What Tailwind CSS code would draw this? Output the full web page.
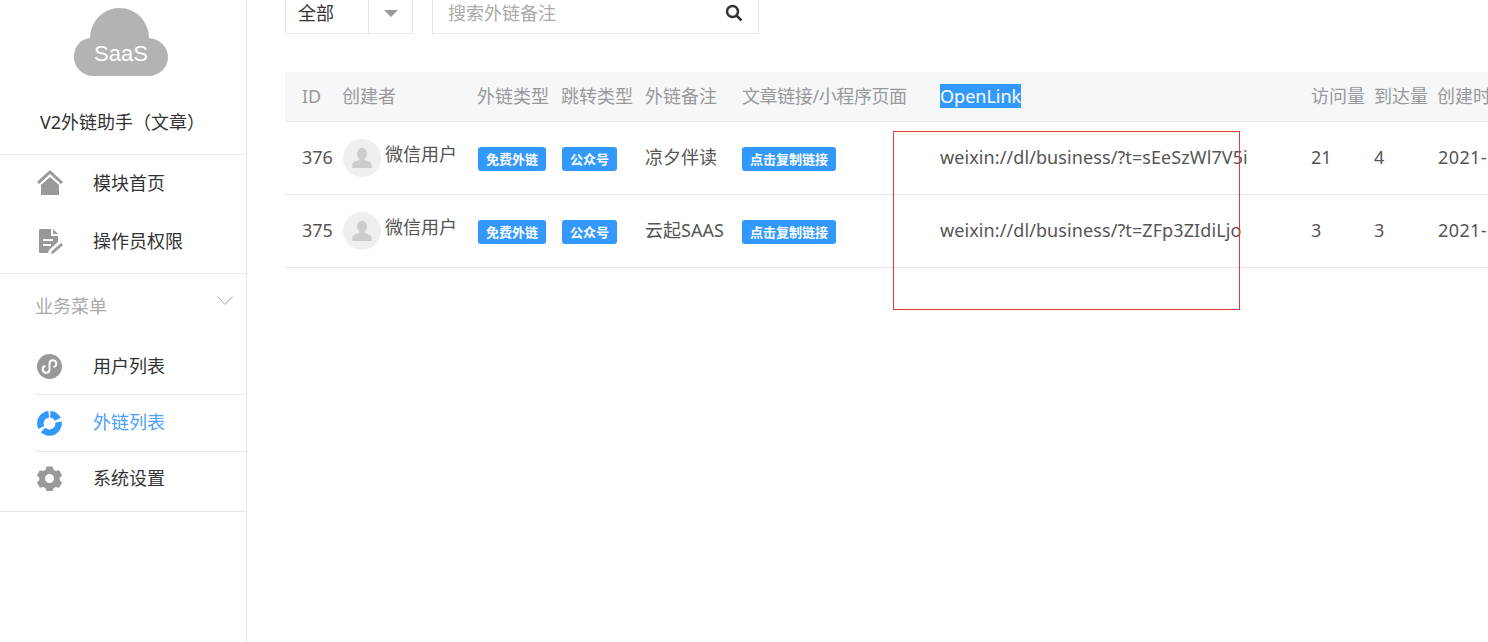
<!DOCTYPE html>
<html lang="zh-CN">

<head>
  <meta charset="utf-8" />
  <title>V2外链助手</title>
  <script src="https://cdn.jsdelivr.net/npm/@tailwindcss/browser@4"></script>
</head>

<body class="relative flex h-[642px] overflow-hidden bg-white text-[18px] text-[#333] font-['Noto_Sans','Noto_Sans_CJK_SC',sans-serif]">

  <!-- SIDEBAR -->
  <aside class="w-[247px] h-[642px] shrink-0 border-r border-[#e8e8e8]">
    <div class="h-[155px] pt-[8px] border-b border-[#e8e8e8]">
      <svg class="ml-[74px]" width="94" height="68" viewBox="0 0 94 68">
        <path fill="#b3b3b3" d="M16 30A29.500 30 0 0 1 75 30C86 31 94 39 94 49 94 60 85 68 74 68H20C9 68 0 60 0 49 0 39 6 31 16 30z" />
        <text x="47" y="53" text-anchor="middle" fill="#fff" font-size="22" font-family="Liberation Sans, sans-serif">SaaS</text>
      </svg>
      <div class="ml-[40px] mt-[32px] leading-[28px] text-[#333]">V2外链助手（文章）</div>
    </div>

    <div class="h-[119px] border-b border-[#e8e8e8]">
      <div class="flex items-center h-[56px] pl-[37px]">
        <svg class="w-[26px] h-[26px] mr-[30px]" viewBox="0 0 26 26" fill="#999">
          <path d="M13 0 0 12l2 2L13 4l11 10 2-2z" />
          <path d="M13 7 4 15v10h18V15z" />
        </svg>
        <span>模块首页</span>
      </div>
      <div class="flex items-center h-[60px] pl-[37px]">
        <svg class="w-[26px] h-[26px] mr-[30px]" viewBox="0 0 26 26" fill="#999">
          <path d="M2 2a1 1 0 0 1 1-1h11v7h7v6l-9 8-1 3H3a1 1 0 0 1-1-1z" />
          <path d="m16 1 5 5h-5z" />
          <path fill="#fff" d="M6 11h10v2H6zM6 16h8v2H6z" />
          <path d="m15 23 9-8 2 2-9 8-3 1z" />
        </svg>
        <span>操作员权限</span>
      </div>
    </div>

    <div class="flex justify-between h-[65px] pl-[35px] pr-[13px] pt-[18px] text-[#aaa]">
      <span class="leading-[28px]">业务菜单</span>
      <svg class="mt-[4px]" width="16" height="10" viewBox="0 0 16 10" fill="none" stroke="#aaa" stroke-width="1">
        <path d="M.5.5 8 8.500 15.500.5" />
      </svg>
    </div>

    <div class="ml-[35px]">
      <div class="flex items-center h-[56px] border-b border-[#e8e8e8] pl-[2px]">
        <svg class="w-[25px] h-[25px] mr-[31px]" viewBox="0 0 25 25">
          <circle cx="12.500" cy="12.500" r="12.500" fill="#999" />
          <path fill="none" stroke="#fff" stroke-width="2" d="M8.500 12a3.400 3.400 0 1 0 4 3.400V9.500a3.400 3.400 0 1 1 4 3.400" />
        </svg>
        <span>用户列表</span>
      </div>
      <div class="flex items-center h-[57px] border-b border-[#e8e8e8] pl-[2px] text-[#4d9fff]">
        <svg class="w-[25px] h-[25px] mr-[31px]" viewBox="0 0 25 25" fill="none" stroke="#3399ff" stroke-width="6.500">
          <path d="M13.300 3.300a9.200 9.200 0 0 1 7.500 5" />
          <path d="M21.500 11a9.200 9.200 0 0 1-15.500 8" />
          <path d="M4.300 16.500a9.200 9.200 0 0 1 7.400-13.200" />
        </svg>
        <span class="-mt-[2px]">外链列表</span>
      </div>
    </div>
    <div class="flex items-center h-[60px] pb-[6px] border-b border-[#e8e8e8] pl-[37px]">
      <svg class="w-[25px] h-[25px] mr-[31px]" viewBox="0 0 25 25" fill="#999">
        <path fill-rule="evenodd" d="M9.500.500h6l1 3.200 2.300 1.300 3.300-.8 3 5.100-2.400 2.400v2.600l2.400 2.400-3 5.100-3.300-.8-2.300 1.300-1 3.200h-6l-1-3.200-2.300-1.300-3.300.8-3-5.100 2.400-2.400v-2.600L-.1 9.300l3-5.100 3.300.8 2.300-1.300zM12.500 8a4.500 4.500 0 1 0 0 9 4.500 4.500 0 0 0 0-9z" />
      </svg>
      <span>系统设置</span>
    </div>
  </aside>

  <!-- MAIN -->
  <main class="flex-1 min-w-0 pl-[38px]">
    <div class="flex gap-[19px] h-[34px]">
      <div class="flex w-[128px] border border-t-0 border-[#e8e8e8]">
        <div class="w-[83px] pl-[12px] leading-[26px] border-r border-[#e8e8e8]">全部</div>
        <div class="flex-1 flex justify-center pt-[10px]">
          <div class="w-0 h-0 border-x-[7px] border-x-transparent border-t-[7px] border-t-[#999]"></div>
        </div>
      </div>
      <div class="flex justify-between w-[327px] pl-[15px] pr-[15px] border border-t-0 border-[#e8e8e8]">
        <span class="leading-[27px] text-[#aaa]">搜索外链备注</span>
        <svg class="mt-[4px]" width="18" height="18" viewBox="0 0 18 18" fill="none" stroke="#333" stroke-width="2.500">
          <circle cx="7.500" cy="7.500" r="5.500" />
          <path d="m11.500 11.500 5 5" />
        </svg>
      </div>
    </div>

    <table class="mt-[38px] w-[1352px] table-fixed border-collapse text-left">
      <colgroup>
        <col class="w-[57px]" />
        <col class="w-[135px]" />
        <col class="w-[84px]" />
        <col class="w-[84px]" />
        <col class="w-[97px]" />
        <col class="w-[198px]" />
        <col class="w-[371px]" />
        <col class="w-[63px]" />
        <col class="w-[63px]" />
        <col class="w-[200px]" />
      </colgroup>
      <thead class="bg-[#f6f7f9] text-[#999]">
        <tr class="h-[49px] border-b border-[#e8e8e8]">
          <th class="pl-[17px] font-normal">ID</th>
          <th class="font-normal">创建者</th>
          <th class="font-normal">外链类型</th>
          <th class="font-normal">跳转类型</th>
          <th class="font-normal">外链备注</th>
          <th class="font-normal whitespace-nowrap tracking-[-0.4px]">文章链接/小程序页面</th>
          <th class="font-normal"><span class="bg-[#3399ff] text-white leading-[24px]">OpenLink</span></th>
          <th class="font-normal">访问量</th>
          <th class="font-normal">到达量</th>
          <th class="font-normal whitespace-nowrap">创建时间</th>
        </tr>
      </thead>
      <tbody class="text-[#555]">
        <tr class="h-[73px] border-b border-[#e8e8e8]">
          <td class="pl-[17px]">376</td>
          <td>
            <div class="flex pl-[1px]">
              <div class="flex items-center justify-center w-[38px] h-[38px] mr-[4px] rounded-full bg-[#efefef]">
                <svg width="20" height="20" viewBox="0 0 20 20" fill="#ccc">
                  <path d="M10 0c3 0 5 2.500 5 5.500 0 2-1 4-2.300 5v1.500c3 1 7 2 7 5V20H.3v-3c0-3 4-4 7-5v-1.500C6 9.500 5 7.500 5 5.500 5 2.500 7 0 10 0z" />
                </svg>
              </div>
              <span class="leading-[30px]">微信用户</span>
            </div>
          </td>
          <td class="pl-[1px]"><span class="inline-block w-[68px] h-[24px] rounded-[3px] bg-[#3399ff] text-center text-[13px] font-bold leading-[24px] text-white align-middle">免费外链</span></td>
          <td class="pl-[1px]"><span class="inline-block w-[55px] h-[24px] rounded-[3px] bg-[#3399ff] text-center text-[13px] font-bold leading-[24px] text-white align-middle">公众号</span></td>
          <td>凉夕伴读</td>
          <td><span class="inline-block w-[94px] h-[24px] rounded-[3px] bg-[#3399ff] text-center text-[13px] font-bold leading-[24px] text-white align-middle">点击复制链接</span></td>
          <td class="whitespace-nowrap tracking-[0.09px]">weixin://dl/business/?t=sEeSzWl7V5i</td>
          <td>21</td>
          <td>4</td>
          <td class="pl-[1px] whitespace-nowrap tracking-[0.4px]">2021-10-12 10:20</td>
        </tr>
        <tr class="h-[73px] border-b border-[#e8e8e8]">
          <td class="pl-[17px]">375</td>
          <td>
            <div class="flex pl-[1px]">
              <div class="flex items-center justify-center w-[38px] h-[38px] mr-[4px] rounded-full bg-[#efefef]">
                <svg width="20" height="20" viewBox="0 0 20 20" fill="#ccc">
                  <path d="M10 0c3 0 5 2.500 5 5.500 0 2-1 4-2.300 5v1.500c3 1 7 2 7 5V20H.3v-3c0-3 4-4 7-5v-1.500C6 9.500 5 7.500 5 5.500 5 2.500 7 0 10 0z" />
                </svg>
              </div>
              <span class="leading-[30px]">微信用户</span>
            </div>
          </td>
          <td class="pl-[1px]"><span class="inline-block w-[68px] h-[24px] rounded-[3px] bg-[#3399ff] text-center text-[13px] font-bold leading-[24px] text-white align-middle">免费外链</span></td>
          <td class="pl-[1px]"><span class="inline-block w-[55px] h-[24px] rounded-[3px] bg-[#3399ff] text-center text-[13px] font-bold leading-[24px] text-white align-middle">公众号</span></td>
          <td>云起SAAS</td>
          <td><span class="inline-block w-[94px] h-[24px] rounded-[3px] bg-[#3399ff] text-center text-[13px] font-bold leading-[24px] text-white align-middle">点击复制链接</span></td>
          <td class="whitespace-nowrap tracking-[0.09px]">weixin://dl/business/?t=ZFp3ZIdiLjo</td>
          <td>3</td>
          <td>3</td>
          <td class="pl-[1px] whitespace-nowrap tracking-[0.4px]">2021-10-12 10:18</td>
        </tr>
      </tbody>
    </table>
  </main>

  <!-- red annotation box drawn over the table -->
  <div class="absolute left-[893px] top-[131px] w-[347px] h-[179px] border border-[#e53935]"></div>
</body>

</html>
